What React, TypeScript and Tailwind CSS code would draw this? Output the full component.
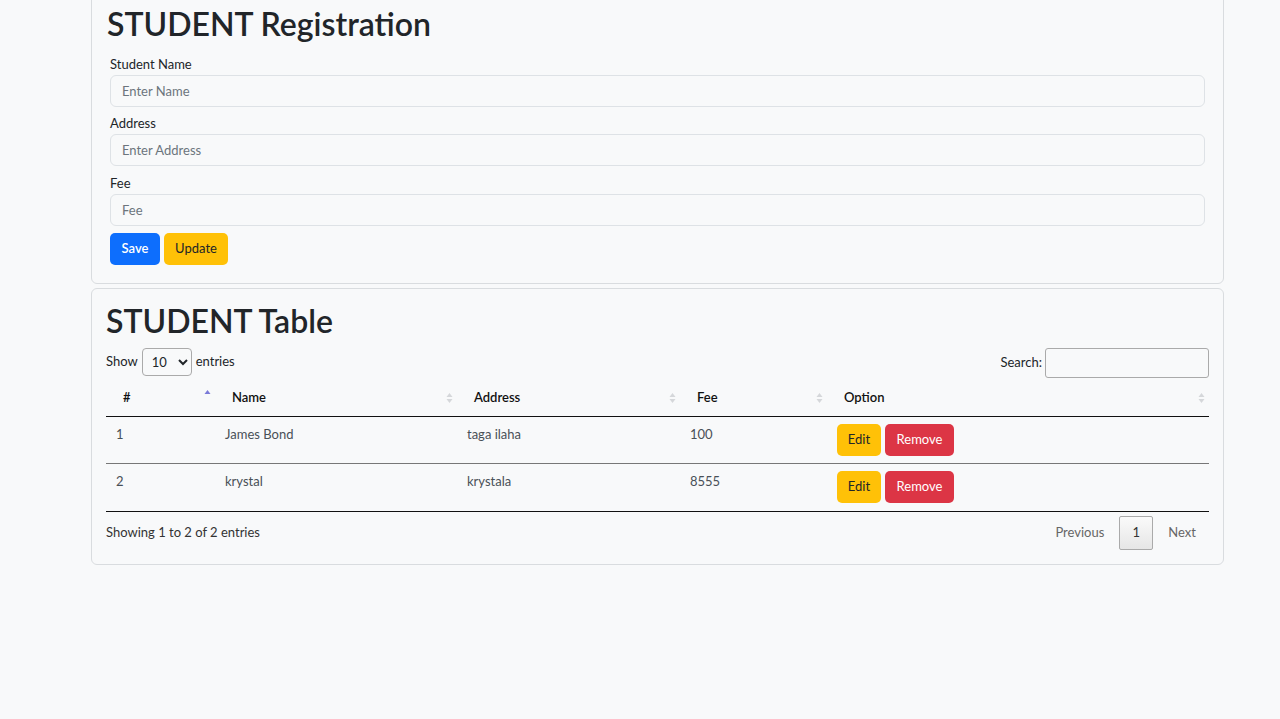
import React from "react";

const students = [
  { id: 1, name: "James Bond", address: "taga ilaha", fee: "100" },
  { id: 2, name: "krystal", address: "krystala", fee: "8555" },
];

function SortIcon({ active }: { active?: boolean }) {
  return (
    <svg width="7" height="12" viewBox="0 0 7 12" className="shrink-0">
      <path d="M3.5 1 L6.5 5 L0.5 5 Z" fill={active ? "#7a7ad8" : "#d5d7da"} />
      {!active && <path d="M3.5 11 L6.5 7 L0.5 7 Z" fill="#d5d7da" />}
    </svg>
  );
}

function Field({ label, placeholder }: { label: string; placeholder: string }) {
  return (
    <div className="flex flex-col">
      <label className="text-[13px] leading-[18px] text-[#212529] mb-[2px]">{label}</label>
      <input
        placeholder={placeholder}
        className="h-[32px] rounded-[6px] border border-[#dee2e6] bg-[#f8f9fa] px-[11px] text-[13px] text-[#212529] placeholder:text-[#6c757d] outline-none"
      />
    </div>
  );
}

export default function App() {
  return (
    <div
      className="min-h-[719px] bg-[#f8f9fa] text-[#212529]"
      style={{ fontFamily: 'Lato, "Noto Sans", sans-serif' }}
    >
      <div className="ml-[91px] w-[1133px] flex flex-col gap-[4px]">
        {/* registration card */}
        <div className="-mt-[6px] rounded-[6px] border border-[#d9dcdf] bg-[#f8f9fa] px-[15px] pt-[10px] pb-[18px]">
          <h2 className="text-[32px] leading-[38px] font-semibold mb-[12px]">STUDENT Registration</h2>
          <div className="px-[3px] flex flex-col gap-[7px]">
            <Field label="Student Name" placeholder="Enter Name" />
            <Field label="Address" placeholder="Enter Address" />
            <div className="pt-[1px]">
              <Field label="Fee" placeholder="Fee" />
            </div>
            <div className="flex gap-[4px]">
              <button className="h-[32px] w-[50px] rounded-[5px] bg-[#0d6efd] text-white text-[13px] font-semibold">Save</button>
              <button className="h-[32px] w-[64px] rounded-[5px] bg-[#ffc107] text-[#212529] text-[13px]">Update</button>
            </div>
          </div>
        </div>

        {/* table card */}
        <div className="rounded-[6px] border border-[#d9dcdf] bg-[#f8f9fa] px-[14px] pt-[13px] pb-[14px]">
          <h2 className="text-[32px] leading-[38px] font-semibold mb-[8px]">STUDENT Table</h2>
          <div className="flex items-start justify-between text-[13px] h-[30px]">
            <div className="flex items-center gap-[4px] h-[28px]">
              <span>Show</span>
              <select className="h-[28px] w-[50px] rounded-[4px] border border-[#aaa] bg-[#f8f9fa] px-[5px] text-[13px]">
                <option>10</option>
                <option>25</option>
                <option>50</option>
                <option>100</option>
              </select>
              <span>entries</span>
            </div>
            <div className="flex items-center gap-[3px] h-[30px]">
              <span>Search:</span>
              <input className="h-[30px] w-[164px] rounded-[3px] border border-[#aaa] bg-transparent outline-none" />
            </div>
          </div>

          <table className="w-[1103px] table-fixed border-collapse text-[13px]">
            <colgroup>
              <col className="w-[109px]" />
              <col className="w-[242px]" />
              <col className="w-[223px]" />
              <col className="w-[147px]" />
              <col className="w-[382px]" />
            </colgroup>
            <thead>
              <tr className="border-b border-[#111]">
                {["#", "Name", "Address", "Fee", "Option"].map((h, i) => (
                  <th key={h} className="h-[38px] pl-[17px] pr-[4px] pt-[2px] text-left font-semibold text-[#111]">
                    <div className="flex items-center justify-between">
                      <span>{h}</span>
                      <span className={i === 0 ? "-mt-[6px]" : ""}>
                        <SortIcon active={i === 0} />
                      </span>
                    </div>
                  </th>
                ))}
              </tr>
            </thead>
            <tbody>
              {students.map((s, idx) => {
                const last = idx === students.length - 1;
                return (
                  <tr key={s.id} className={last ? "border-b border-[#111]" : "border-b border-[#777]"}>
                    <td className={`${last ? "h-[48px]" : "h-[47px]"} pl-[10px] align-top pt-[8px] text-[#495057]`}>{s.id}</td>
                    <td className="pl-[10px] align-top pt-[8px] text-[#495057]">{s.name}</td>
                    <td className="pl-[10px] align-top pt-[8px] text-[#495057]">{s.address}</td>
                    <td className="pl-[10px] align-top pt-[8px] text-[#495057]">{s.fee}</td>
                    <td className="pl-[10px] align-top pt-[7px]">
                      <div className="flex gap-[4px]">
                        <button className="h-[32px] w-[44px] rounded-[5px] bg-[#ffc107] text-[#212529] text-[13px]">Edit</button>
                        <button className="h-[32px] w-[69px] rounded-[5px] bg-[#dc3545] text-white text-[13px]">Remove</button>
                      </div>
                    </td>
                  </tr>
                );
              })}
            </tbody>
          </table>

          <div className="mt-[4px] flex items-center justify-between text-[13px] text-[#333]">
            <span>Showing 1 to 2 of 2 entries</span>
            <div className="flex items-center">
              <span className="px-[15px] text-[#666]">Previous</span>
              <span className="flex h-[34px] w-[34px] items-center justify-center rounded-[2px] border border-[#aaa] bg-gradient-to-b from-[#fafafa] to-[#e6e6e6] text-[#333]">1</span>
              <span className="pl-[15px] pr-[13px] text-[#666]">Next</span>
            </div>
          </div>
        </div>
      </div>
    </div>
  );
}
